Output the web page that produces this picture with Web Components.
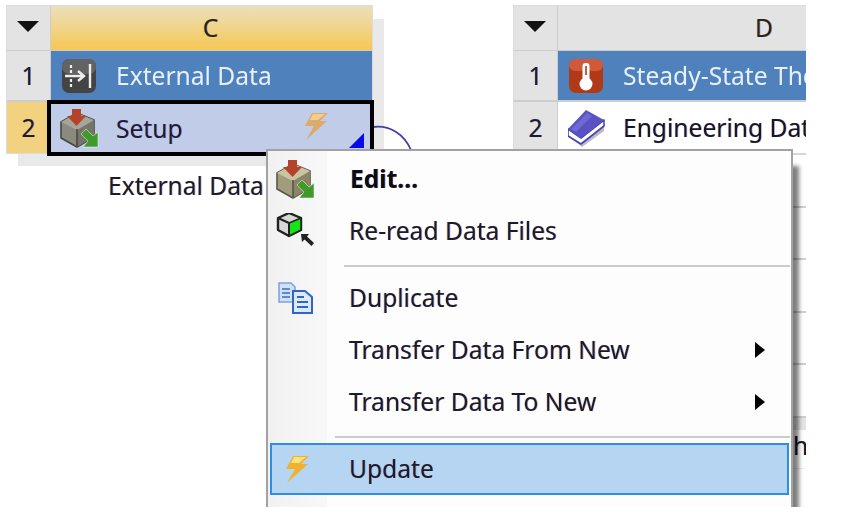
<!DOCTYPE html>
<html><head><meta charset="utf-8">
<style>
html,body{margin:0;padding:0;background:#fff;}
body{width:847px;height:516px;overflow:hidden;position:relative;font-family:"Noto Sans","Open Sans",sans-serif;--fr:-.7px 0 .3px rgba(255,140,0,.4),.7px 0 .3px rgba(0,70,255,.4);}
wb-system.c{position:absolute;left:7px;top:6px;width:365px;--head:linear-gradient(#eadfbd,#f6c853);}
wb-system.d{position:absolute;left:514px;top:6px;width:458px;clip-path:inset(-1px 166px 0 -1px);--head:#e3e3e3;}
.label{position:absolute;left:108px;top:170px;font-size:24.6px;line-height:32px;color:#1c1c28;white-space:nowrap;filter:blur(.5px);text-shadow:var(--fr);}
wb-link{position:absolute;left:372px;top:124px;}
wb-menu{position:absolute;left:266px;top:149px;}
.s2{--l:67px;}
</style></head><body>
<wb-back></wb-back>
<wb-system class="c"><span slot="t">C</span>
  <wb-row blue style="--mt:1px"><span slot="n">1</span><wb-icon slot="i" k="ext"></wb-icon>External Data</wb-row>
  <wb-row flag style="--h:51px"><span slot="n">2</span></wb-row>
</wb-system>
<wb-link></wb-link>
<wb-sel><wb-icon slot="i" k="setupg"></wb-icon>Setup<wb-icon slot="b" k="bolt"></wb-icon></wb-sel>
<div class="label">External Data</div>
<wb-system class="d"><span slot="t">D</span>
  <wb-row blue style="--mt:1px"><span slot="n">1</span><wb-icon slot="i" k="therm"></wb-icon>Steady-State Thermal</wb-row>
  <wb-row style="--h:51px"><span slot="n">2</span><wb-icon slot="i" k="book"></wb-icon>Engineering Data</wb-row>
  <wb-d-rows></wb-d-rows>
</wb-system>
<wb-menu>
  <wb-menu-item bold><wb-icon slot="i" k="setup"></wb-icon>Edit...</wb-menu-item>
  <wb-menu-item><wb-icon slot="i" k="cube"></wb-icon>Re-read Data Files</wb-menu-item>
  <wb-menu-sep></wb-menu-sep>
  <wb-menu-item><wb-icon slot="i" k="dup"></wb-icon>Duplicate</wb-menu-item>
  <wb-menu-item sub>Transfer Data From New</wb-menu-item>
  <wb-menu-item sub>Transfer Data To New</wb-menu-item>
  <wb-menu-sep class="s2"></wb-menu-sep>
  <wb-menu-item hi><wb-icon slot="i" k="bolt2"></wb-icon>Update</wb-menu-item>
</wb-menu>
<script>
const boltSvg=(a,b)=>`<svg viewBox="0 0 26 30" width="26" height="30"><path d="M9 2H25L17 10H24L3 29 11 15H2Z" fill="${a}"/><path d="M10 3H22L15 9H7Z" fill="${b}"/></svg>`;
const setupSvg=(top,left,right,line)=>`<svg viewBox="0 0 41 39" width="41" height="39"><path d="M1 13 17 4 34 11V28L17 38 1 29Z" fill="${left}" stroke="${line}" stroke-width="1.6" stroke-linejoin="round"/><path d="M17 20 34 11V28L17 38Z" fill="${right}"/><path d="M1 13 17 21 34 11 17 4Z" fill="${top}"/><path d="M17 20V38" stroke="${line}" stroke-width="1.6"/><path d="M12 0H21V7H26L16.500 17 7 7H12Z" fill="#b5432a"/><path d="M21 25 26 20 33 27 38 23V38H23L28 32Z" fill="#3f9a2a" stroke="#fff" stroke-width=".5"/></svg>`;
const svgs={
  ext:'<svg viewBox="0 0 36 36" width="36" height="36"><rect x="1" y="1" width="34" height="34" rx="7" fill="#444"/><rect x="1" y="1" width="34" height="15" rx="7" fill="#636363"/><path d="M4 18H22M17 13l6 5-6 5M29 6V30" fill="none" stroke="#eee" stroke-width="2.4"/><path d="M10 7v3M10 12v3M10 21v3M10 26v3" stroke="#eee" stroke-width="2.2"/></svg>',
  setup:setupSvg('#cbc4a2','#a39c7c','#8b8568','#5a5648'),
  setupg:setupSvg('#a5a59c','#8a8a80','#75756c','#48483f'),
  bolt:boltSvg('#dcaa6a','#f0cf8e'),
  bolt2:boltSvg('#f0b12e','#ffe27a'),
  therm:'<svg viewBox="0 0 36 36" width="36" height="36"><rect x="1" y="1" width="34" height="34" rx="7" fill="#b03a18"/><rect x="1" y="1" width="34" height="12" rx="6" fill="#d2583a"/><rect x="14.500" y="5" width="7" height="20" rx="3" fill="#fff"/><circle cx="18" cy="26" r="6.500" fill="#fff"/><rect x="17.200" y="8" width="1.600" height="9" fill="#b03a18"/></svg>',
  book:'<svg viewBox="0 0 38 38" width="38" height="38"><path d="M0 27 13 35 36 17V22L14 38Z" fill="#b9b9c9"/><path d="M0 20 13 29 36 11V17L13 35 0 27Z" fill="#fff" stroke="#4a44a8" stroke-width="1.6" stroke-linejoin="round"/><path d="M18 1 36 11 13 29 0 20Z" fill="#5a52c2"/><path d="M3 20 19 4 24 7 8 23Z" fill="#6f68d2"/></svg>',
  cube:'<svg viewBox="0 0 40 36" width="40" height="36"><path d="M2 5 13 0 25 5V17L13 23 2 17Z" fill="#d8d8d8" stroke="#222" stroke-width="2.400" stroke-linejoin="round"/><path d="M13 10 25 5V17L13 23Z" fill="#16e416" stroke="#222" stroke-width="1.600"/><path d="M2 5 13 10V23" fill="none" stroke="#222" stroke-width="2"/><path d="M25 21H33L31 23.500 38 30 35.500 33 28.500 26.500 26 29Z" fill="#222"/></svg>',
  dup:'<svg viewBox="0 0 36 32" width="36" height="32"><path d="M1 1H13L17 5V20H1Z" fill="#cfe0f8" stroke="#7fa3dc" stroke-width="1.600"/><path d="M4 7H12M4 11H12M4 15H12" stroke="#5f8ad2" stroke-width="1.800"/><path d="M15 9H27L34 15V31H15Z" fill="#dce9fb" stroke="#2f66c4" stroke-width="2"/><path d="M19 15H26M19 20H30M19 25H30" stroke="#2f66c4" stroke-width="2"/></svg>'
};
class WbIcon extends HTMLElement{
  constructor(){super();
    this.attachShadow({mode:'open'}).innerHTML='<style>:host{display:inline-flex;flex:none;filter:blur(.6px);}svg{display:block}</style>'+svgs[this.getAttribute('k')];
  }
}
customElements.define('wb-icon',WbIcon);

class WbRow extends HTMLElement{
  constructor(){super();this.attachShadow({mode:'open'}).innerHTML=`<style>
    :host{display:grid;grid-template-columns:43px 1fr;column-gap:1px;height:var(--h,49px);margin-top:var(--mt,2px);font-size:24.6px;}
    .n{background:#e3e3e3;display:flex;align-items:center;justify-content:center;color:#1b1b30;text-shadow:var(--fr);}
    :host([flag]) .n{background:#f3d27f;}
    .b{display:flex;align-items:center;min-width:0;overflow:hidden;gap:17px;padding-left:10px;background:#fff;color:#16162a;white-space:nowrap;text-shadow:var(--fr);}
    :host([blue]) .b{background:#4f81bd;color:#e8f1fb;text-shadow:none;}
    span{filter:blur(.5px);}
    .ic{display:flex;width:38px;justify-content:flex-start;}
    </style><div class="n"><span><slot name="n"></slot></span></div><div class="b"><div class="ic"><slot name="i"></slot></div><span><slot></slot></span></div>`;}
}
customElements.define('wb-row',WbRow);

class WbSystem extends HTMLElement{
  constructor(){super();this.attachShadow({mode:'open'}).innerHTML=`<style>
    :host{display:block;font-size:24.6px;background:#cdcdcd;box-shadow:0 0 0 1px #dcdcdc;}
    .top{display:grid;grid-template-columns:43px 1fr;column-gap:1px;height:44px;}
    .arrow{background:#e3e3e3;display:flex;align-items:center;justify-content:center;}
    .arrow i{width:0;height:0;border:11px solid transparent;border-top:11px solid #111;border-bottom:0;margin:-3px 0 0 -1px;}
    .title{background:var(--head);display:flex;align-items:center;justify-content:center;color:#2a2418;text-shadow:var(--fr);}
    .title span{filter:blur(.5px);margin:-2px 0 0 -2px;}
    </style><div class="top"><div class="arrow"><i></i></div><div class="title"><span><slot name="t"></slot></span></div></div><slot></slot>`;}
}
customElements.define('wb-system',WbSystem);

class WbMenuItem extends HTMLElement{
  constructor(){super();const S=this.attachShadow({mode:'open'});
    S.innerHTML=`<style>
    :host{display:grid;grid-template-columns:59px 1fr 36px;align-items:center;height:52px;font-size:24.6px;color:#1b1b2c;box-sizing:border-box;text-shadow:var(--fr);}
    :host([bold]){font-weight:700;color:#0c0c16;}
    :host([hi]){background:#b5d5f2;outline:2px solid #2e8fe2;outline-offset:-2px;margin:0 2px;grid-template-columns:57px 1fr 36px;}
    .g{display:flex;justify-content:center;align-items:center;padding-right:3px;}
    .t{padding-left:22px;margin-top:-2px;filter:blur(.5px);white-space:nowrap;}
    :host([bold]) .t{padding-left:23px;}
    :host([hi]) .t{padding-left:22px;}
    .a{width:0;height:0;border:8px solid transparent;border-left:10px solid #000;border-right:0;}
    </style><div class="g"><slot name="i"></slot></div><div class="t"><slot></slot></div><div class="x"></div>`;
    if(this.hasAttribute('sub')) S.querySelector('.x').innerHTML='<div class="a"></div>';
  }
}
customElements.define('wb-menu-item',WbMenuItem);

class WbMenuSep extends HTMLElement{
  constructor(){super();this.attachShadow({mode:'open'}).innerHTML=`<style>:host{display:block;height:15px;padding:8px 1px 0 var(--l,76px);box-sizing:border-box;}div{height:2px;background:#cbcbcb;}</style><div></div>`;}
}
customElements.define('wb-menu-sep',WbMenuSep);

class WbMenu extends HTMLElement{
  constructor(){super();this.attachShadow({mode:'open'}).innerHTML=`<style>
    :host{display:block;width:527px;height:358px;box-sizing:border-box;border:2px solid #a2a2a2;border-bottom:0;background:linear-gradient(90deg,#f1f1f1 0,#f8f8f8 59px,#fdfdfd 59px);box-shadow:9px 14px 4px -3px rgba(0,0,0,.5);clip-path:inset(-20px -20px 0 -20px);padding-top:2px;}
    </style><slot></slot>`;}
}
customElements.define('wb-menu',WbMenu);

class WbLink extends HTMLElement{
  constructor(){super();this.attachShadow({mode:'open'}).innerHTML=`<style>:host{display:block;width:42px;height:28px;}svg{display:block;filter:blur(.4px)}</style><svg width="42" height="28"><path d="M1 3C18 1 32 10 39 26" fill="none" stroke="#3f3fa6" stroke-width="1.8"/></svg>`;}
}
customElements.define('wb-link',WbLink);

class WbSel extends HTMLElement{
  constructor(){super();this.attachShadow({mode:'open'}).innerHTML=`<style>
    :host{display:block;position:absolute;left:47px;top:100px;width:327px;height:56px;box-sizing:border-box;border:4px solid #000;background:#c0cce8;}
    .r{display:flex;align-items:center;height:100%;padding-left:9px;gap:15px;font-size:24.6px;color:#1d1d3c;position:relative;text-shadow:var(--fr);}
    .r span{filter:blur(.5px);}
    .bolt{position:absolute;left:252px;top:7px;display:flex;}
    .tri{position:absolute;right:6px;bottom:4px;width:0;height:0;border-left:15px solid transparent;border-bottom:15px solid #0a0ae8;}
    </style><div class="r"><slot name="i"></slot><span><slot></slot></span><div class="bolt"><slot name="b"></slot></div><div class="tri"></div></div>`;}
}
customElements.define('wb-sel',WbSel);

class WbBack extends HTMLElement{
  constructor(){super();this.attachShadow({mode:'open'}).innerHTML=`<style>:host{display:block;position:absolute;left:18px;top:19px;width:366px;height:147px;background:#e9e9e9;}</style>`;}
}
customElements.define('wb-back',WbBack);

class WbDRows extends HTMLElement{
  constructor(){super();this.attachShadow({mode:'open'}).innerHTML=`<style>:host{display:block;margin-left:44px;border-top:2px solid #d6d6d6;background:#fff;}
    div{height:52.5px;box-sizing:border-box;border-bottom:2px solid #cfcfcf;}
    div.band{height:12px;border:0;background:#e4e4e4;}
    div.last{height:40px;border:0;font-size:24.6px;line-height:33px;padding:0 0 0 235px;color:#1b1b2c;text-shadow:var(--fr);}
    span{display:block;filter:blur(.5px);margin-top:-1px}
    </style><div></div><div></div><div></div><div></div><div></div><div class="band"></div><div class="last"><span>h</span></div>`;}
}
customElements.define('wb-d-rows',WbDRows);
</script>
</body></html>
